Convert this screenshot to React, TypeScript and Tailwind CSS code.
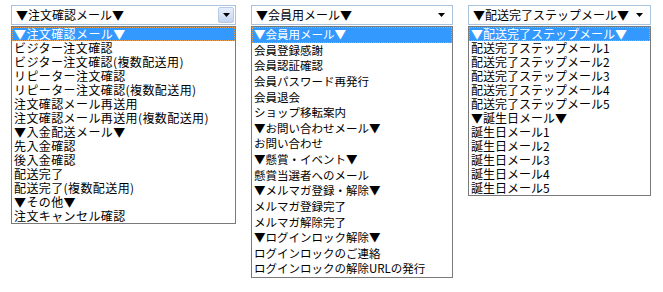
const list1 = [
  "▼注文確認メール▼",
  "ビジター注文確認",
  "ビジター注文確認(複数配送用)",
  "リピーター注文確認",
  "リピーター注文確認(複数配送用)",
  "注文確認メール再送用",
  "注文確認メール再送用(複数配送用)",
  "▼入金配送メール▼",
  "先入金確認",
  "後入金確認",
  "配送完了",
  "配送完了(複数配送用)",
  "▼その他▼",
  "注文キャンセル確認",
];

const list2 = [
  "▼会員用メール▼",
  "会員登録感謝",
  "会員認証確認",
  "会員パスワード再発行",
  "会員退会",
  "ショップ移転案内",
  "▼お問い合わせメール▼",
  "お問い合わせ",
  "▼懸賞・イベント▼",
  "懸賞当選者へのメール",
  "▼メルマガ登録・解除▼",
  "メルマガ登録完了",
  "メルマガ解除完了",
  "▼ログインロック解除▼",
  "ログインロックのご連絡",
  "ログインロックの解除URLの発行",
];

const list3 = [
  "▼配送完了ステップメール▼",
  "配送完了ステップメール1",
  "配送完了ステップメール2",
  "配送完了ステップメール3",
  "配送完了ステップメール4",
  "配送完了ステップメール5",
  "▼誕生日メール▼",
  "誕生日メール1",
  "誕生日メール2",
  "誕生日メール3",
  "誕生日メール4",
  "誕生日メール5",
];

function Arrow() {
  return (
    <svg width="7" height="4" viewBox="0 0 7 4">
      <path d="M0 0h7L3.5 4z" fill="#000" />
    </svg>
  );
}

function Dropdown({
  items,
  width,
  button,
  rowClass,
}: {
  items: string[];
  width: string;
  button?: boolean;
  rowClass: string;
}) {
  return (
    <div className={`flex flex-col ${width}`}>
      <div className="flex h-[20px] items-center border border-[#a9c2de] bg-white">
        <span className="flex-1 whitespace-nowrap pl-[4px] text-[12px] leading-[18px] text-black">
          {items[0]}
        </span>
        {button ? (
          <div className="mr-px flex h-[16px] w-[16px] items-center justify-center rounded-[2px] border border-[#b7cbe3] bg-gradient-to-b from-[#e6eefc] to-[#c4d6f2]">
            <Arrow />
          </div>
        ) : (
          <div className="mr-[7px] flex items-center">
            <Arrow />
          </div>
        )}
      </div>
      <div className="mt-px flex flex-col border border-[#7a7a7a] bg-white">
        {items.map((t, i) => (
          <div
            key={i}
            className={`whitespace-nowrap pl-[2px] ${rowClass} ${
              i === 0
                ? "bg-[#3399ff] text-white outline outline-1 -outline-offset-1 outline-dotted outline-[#e8a050]"
                : "text-black"
            }`}
          >
            {t}
          </div>
        ))}
      </div>
    </div>
  );
}

export default function App() {
  return (
    <div
      className="flex h-[292px] w-[663px] items-start gap-[15px] bg-white pl-[11px] pt-[5px]"
      style={{ fontFamily: '"Noto Sans CJK JP", "Noto Sans", sans-serif' }}
    >
      <Dropdown
        items={list1}
        width="w-[225px]"
        button
        rowClass="h-[14px] text-[12px] leading-[14px] tracking-[0.4px]"
      />
      <Dropdown
        items={list2}
        width="w-[202px]"
        rowClass="h-[15.625px] text-[11.5px] leading-[15.625px]"
      />
      <Dropdown
        items={list3}
        width="w-[183px]"
        rowClass="h-[14px] text-[12px] leading-[14px]"
      />
    </div>
  );
}
